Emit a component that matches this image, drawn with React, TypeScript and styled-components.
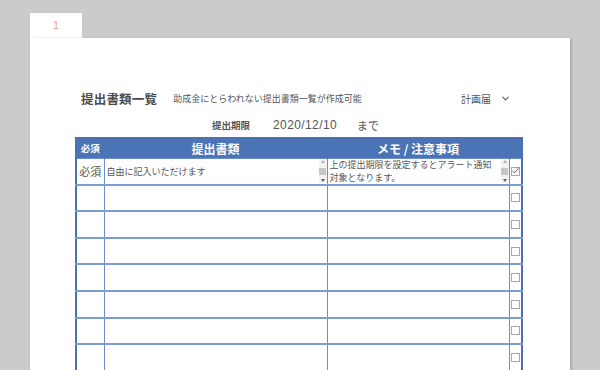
import { ChevronDown } from "lucide-react";
import styled, { createGlobalStyle } from "styled-components";

const GlobalStyle = createGlobalStyle`
  html, body {
    margin: 0;
    padding: 0;
    background: #cbcbcb;
    font-family: "Noto Sans CJK JP", "Noto Sans", sans-serif;
    color: #555;
    overflow: hidden;
  }
`;

const Viewer = styled.div`
  padding: 13px 0 0 30px;
  height: 357px;
`;

const Tab = styled.div`
  width: 52px;
  height: 25px;
  background: #fff;
  display: flex;
  align-items: center;
  justify-content: center;
  color: #ee9a80;
  font-family: "Liberation Sans", sans-serif;
  font-size: 10px;
`;

const Page = styled.div`
  width: 540px;
  height: 340px;
  background: #fff;
  box-shadow: 1px 1px 3px rgba(0, 0, 0, 0.25);
  padding: 51px 0 0 45px;
  box-sizing: border-box;
`;

const TitleRow = styled.div`
  display: flex;
  align-items: center;
  width: 436px;
  height: 18px;
`;

const Title = styled.div`
  font-size: 12.5px;
  font-weight: 700;
  color: #4a4a4a;
  margin-left: 6px;
  letter-spacing: 0.2px;
`;

const Sub = styled.div`
  font-size: 9px;
  color: #555;
  margin-left: 16px;
`;

const Select = styled.div`
  margin-left: auto;
  display: flex;
  align-items: center;
  gap: 9px;
  font-size: 10px;
  color: #555;
`;

const DeadlineRow = styled.div`
  display: flex;
  align-items: center;
  margin: 10px 0 0 137px;
  height: 16px;
`;

const Label = styled.span`
  font-size: 9.5px;
  font-weight: 700;
  color: #555;
`;

const DateText = styled.span`
  font-family: "Liberation Sans", "Noto Sans", sans-serif;
  font-size: 12px;
  color: #555;
  margin-left: 23px;
  letter-spacing: 0.4px;
`;

const Until = styled.span`
  font-size: 11px;
  color: #555;
  margin-left: 20px;
`;

const Table = styled.table`
  margin-top: 4px;
  width: 448px;
  border-collapse: collapse;
  table-layout: fixed;
  border: 2px solid #4a72b2;
`;

const Th = styled.th<{ $small?: boolean }>`
  background: #4a74b6;
  color: #fff;
  height: 19px;
  padding: 0;
  font-size: ${(p) => (p.$small ? "9.5px" : "12px")};
  font-weight: 700;
  border-right: 1px solid #4a74b6;
  text-align: center;
  line-height: 19px;
`;

const Td = styled.td`
  height: 24.6px;
  padding: 0;
  border: 1px solid #6b8fca;
  border-bottom: 2px solid #7c9dd3;
  vertical-align: middle;
`;

const Req = styled.div`
  font-size: 11px;
  color: #555;
  text-align: center;
`;

const Field = styled.div`
  display: flex;
  height: 24px;
  align-items: stretch;
`;

const FieldText = styled.div`
  flex: 1;
  font-size: 9px;
  line-height: 13px;
  color: #555;
  padding: 0 0 0 2px;
  display: flex;
  flex-direction: column;
  justify-content: center;
`;

const Scroll = styled.div`
  width: 8px;
  background: #f2f2f2;
  display: flex;
  flex-direction: column;
  align-items: center;
  justify-content: space-between;
  padding: 1px 0;
`;

const Arrow = styled.div<{ $down?: boolean }>`
  width: 0;
  height: 0;
  border-left: 2px solid transparent;
  border-right: 2px solid transparent;
  ${(p) =>
    p.$down
      ? "border-top: 3px solid #606060;"
      : "border-bottom: 3px solid #b0b0b0;"}
`;

const Thumb = styled.div`
  width: 7px;
  height: 7px;
  background: #c6c6c6;
`;

const Box = styled.div`
  width: 7px;
  height: 7px;
  border: 1px solid #a8a8a8;
  margin: 0 auto;
  position: relative;
  background: #fff;
`;

function ScrollBar() {
  return (
    <Scroll>
      <Arrow />
      <Thumb />
      <Arrow $down />
    </Scroll>
  );
}

function Check({ checked }: { checked?: boolean }) {
  return (
    <Box>
      {checked && (
        <svg
          width="9"
          height="9"
          viewBox="0 0 9 9"
          style={{ position: "absolute", left: -1, top: -2 }}
        >
          <path d="M1.5 5 L3.5 7 L8 1.5" fill="none" stroke="#a0568a" strokeWidth="1" />
        </svg>
      )}
    </Box>
  );
}

export default function App() {
  const empty = Array.from({ length: 7 });
  return (
    <>
      <GlobalStyle />
      <Viewer>
        <Tab>1</Tab>
        <Page>
          <TitleRow>
            <Title>提出書類一覧</Title>
            <Sub>助成金にとらわれない提出書類一覧が作成可能</Sub>
            <Select>
              計画届
              <ChevronDown size={11} strokeWidth={2.2} color="#555" />
            </Select>
          </TitleRow>
          <DeadlineRow>
            <Label>提出期限</Label>
            <DateText>2020/12/10</DateText>
            <Until>まで</Until>
          </DeadlineRow>
          <Table>
            <colgroup>
              <col style={{ width: 28 }} />
              <col style={{ width: 223 }} />
              <col style={{ width: 182 }} />
              <col style={{ width: 13 }} />
            </colgroup>
            <thead>
              <tr>
                <Th $small>必須</Th>
                <Th>提出書類</Th>
                <Th>メモ / 注意事項</Th>
                <Th />
              </tr>
            </thead>
            <tbody>
              <tr>
                <Td>
                  <Req>必須</Req>
                </Td>
                <Td>
                  <Field>
                    <FieldText>自由に記入いただけます</FieldText>
                    <ScrollBar />
                  </Field>
                </Td>
                <Td>
                  <Field>
                    <FieldText>
                      <span>上の提出期限を設定するとアラート通知</span>
                      <span>対象となります。</span>
                    </FieldText>
                    <ScrollBar />
                  </Field>
                </Td>
                <Td>
                  <Check checked />
                </Td>
              </tr>
              {empty.map((_, i) => (
                <tr key={i}>
                  <Td />
                  <Td />
                  <Td />
                  <Td>
                    <Check />
                  </Td>
                </tr>
              ))}
            </tbody>
          </Table>
        </Page>
      </Viewer>
    </>
  );
}
